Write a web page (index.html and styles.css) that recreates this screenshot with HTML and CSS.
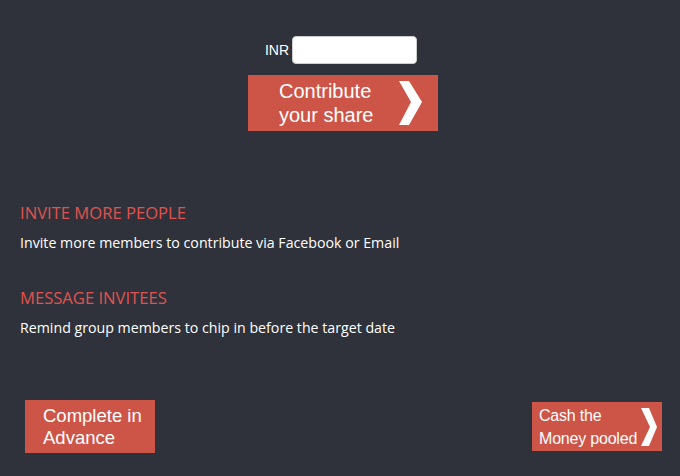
FILE: index.html
```html
<!DOCTYPE html>
<html>
<head>
<meta charset="utf-8">
<link rel="stylesheet" href="styles.css">
</head>
<body>
<div class="page">
  <div class="contribute">
    <div class="amount">
      <label class="currency" for="amt">INR</label>
      <input id="amt" class="amount-input" type="text">
    </div>
    <button class="btn btn-share">
      <span class="btn-text">Contribute<br>your share</span>
      <svg class="chev" width="23" height="44" viewBox="0 0 23 44"><polygon points="0,0 10,0 23,21 10,44 0,44 12,21" fill="#fff"/></svg>
    </button>
  </div>

  <div class="actions">
    <div class="action">
      <h2 class="action-title">INVITE MORE PEOPLE</h2>
      <p class="action-desc">Invite more members to contribute via Facebook or Email</p>
    </div>
    <div class="action">
      <h2 class="action-title">MESSAGE INVITEES</h2>
      <p class="action-desc">Remind group members to chip in before the target date</p>
    </div>
  </div>

  <div class="footer">
    <button class="btn btn-advance"><span class="btn-text">Complete in<br>Advance</span></button>
    <button class="btn btn-cash">
      <span class="btn-text">Cash the<br>Money pooled</span>
      <svg class="chev" width="16" height="38" viewBox="0 0 16 38"><polygon points="0,0 8,0 16,19 8,38 0,38 9,19" fill="#fff"/></svg>
    </button>
  </div>
</div>
</body>
</html>
```
FILE: styles.css
```css
html, body {
  margin: 0;
  padding: 0;
  background: #2f323a;
}
body {
  width: 680px;
  height: 476px;
  overflow: hidden;
  font-family: "Open Sans", sans-serif;
  color: #fff;
}
.page {
  display: flex;
  flex-direction: column;
  padding: 0 18px 0 20px;
}
.contribute {
  display: flex;
  flex-direction: column;
  align-items: center;
  padding-top: 36px;
  padding-left: 4px;
}
.amount {
  display: flex;
  align-items: center;
  gap: 3px;
  padding-right: 4px;
}
.currency {
  font-family: "Liberation Sans", Arial, sans-serif;
  font-size: 14px;
  color: #fff;
}
.amount-input {
  width: 125px;
  height: 28px;
  box-sizing: border-box;
  border: 1px solid #ccc;
  border-radius: 4px;
  background: #fff;
  padding: 0;
}
.btn {
  border: 0;
  background: #cd5548;
  color: #fff;
  font-family: "Liberation Sans", Arial, sans-serif;
  display: flex;
  align-items: center;
  justify-content: space-between;
  text-align: left;
  padding: 0;
  cursor: pointer;
  white-space: nowrap;
}
.chev {
  display: block;
  flex: none;
}
.btn-share {
  margin-top: 11px;
  width: 190px;
  height: 56px;
  padding: 0 16px 0 31px;
  font-size: 20px;
  line-height: 24px;
}
.actions {
  margin-top: 70px;
  display: flex;
  flex-direction: column;
  gap: 33px;
}
.action-title {
  margin: 0;
  font-weight: 400;
  font-size: 16.6px;
  line-height: 24px;
  color: #e0524f;
}
.action-desc {
  margin: 8px 0 0;
  font-size: 14.2px;
  line-height: 20px;
}
.footer {
  margin-top: 62px;
  display: flex;
  justify-content: space-between;
  align-items: flex-start;
  padding-left: 5px;
}
.btn-advance {
  width: 130px;
  height: 53px;
  padding-left: 18px;
  font-size: 18.5px;
  line-height: 22px;
}
.btn-cash {
  margin-top: 2px;
  width: 130px;
  height: 49px;
  padding: 0 5px 0 7px;
  font-size: 16px;
  line-height: 23px;
  letter-spacing: -0.2px;
}
```
